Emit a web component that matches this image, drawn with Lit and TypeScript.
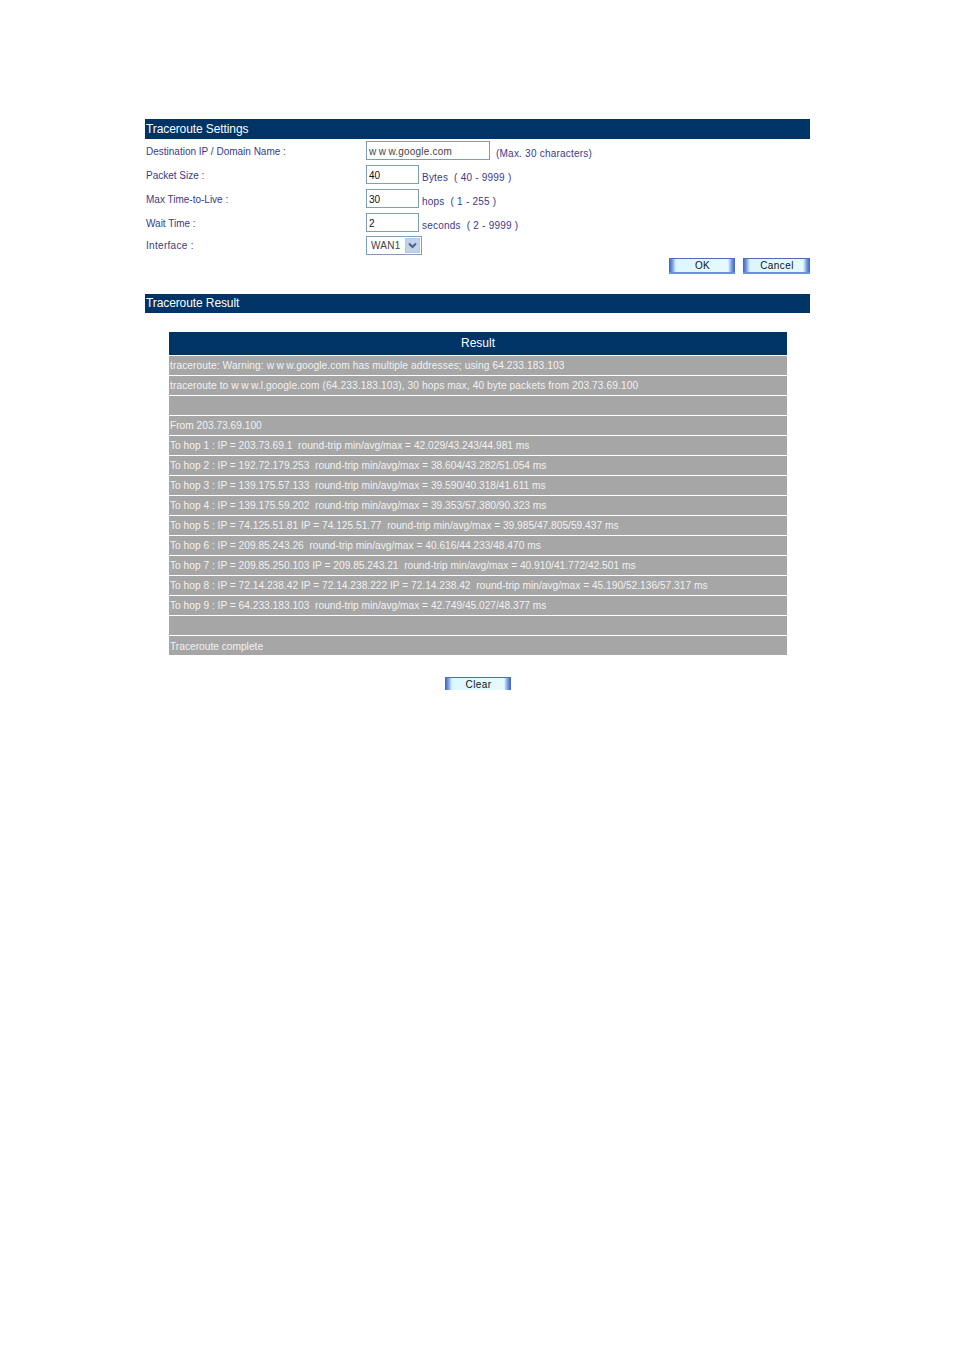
import { LitElement, html, css } from "lit";
import { customElement } from "lit/decorators.js";

const www = html`<span class="www">ww</span>w`;

const rows: unknown[] = [
  html`traceroute: Warning: ${www}.google.com has multiple addresses; using 64.233.183.103`,
  html`traceroute to ${www}.l.google.com (64.233.183.103), 30 hops max, 40 byte packets from 203.73.69.100`,
  "",
  "From 203.73.69.100",
  "To hop 1 : IP = 203.73.69.1  round-trip min/avg/max = 42.029/43.243/44.981 ms",
  "To hop 2 : IP = 192.72.179.253  round-trip min/avg/max = 38.604/43.282/51.054 ms",
  "To hop 3 : IP = 139.175.57.133  round-trip min/avg/max = 39.590/40.318/41.611 ms",
  "To hop 4 : IP = 139.175.59.202  round-trip min/avg/max = 39.353/57.380/90.323 ms",
  "To hop 5 : IP = 74.125.51.81 IP = 74.125.51.77  round-trip min/avg/max = 39.985/47.805/59.437 ms",
  "To hop 6 : IP = 209.85.243.26  round-trip min/avg/max = 40.616/44.233/48.470 ms",
  "To hop 7 : IP = 209.85.250.103 IP = 209.85.243.21  round-trip min/avg/max = 40.910/41.772/42.501 ms",
  "To hop 8 : IP = 72.14.238.42 IP = 72.14.238.222 IP = 72.14.238.42  round-trip min/avg/max = 45.190/52.136/57.317 ms",
  "To hop 9 : IP = 64.233.183.103  round-trip min/avg/max = 42.749/45.027/48.377 ms",
  "",
  "Traceroute complete",
];

const settings = [
  { label: "Packet Size :", value: "40", hint: "Bytes  ( 40 - 9999 )" },
  { label: "Max Time-to-Live :", value: "30", hint: "hops  ( 1 - 255 )" },
  { label: "Wait Time :", value: "2", hint: "seconds  ( 2 - 9999 )" },
];

@customElement("app-root")
export class AppRoot extends LitElement {
  static styles = css`
    :host {
      display: block;
      height: 1350px;
      background: #fff;
      font-family: "Liberation Sans", Arial, sans-serif;
      overflow: hidden;
    }
    .page {
      width: 665px;
      margin-left: 145px;
      padding-top: 119px;
      display: flex;
      flex-direction: column;
    }
    .bar {
      background: #003366;
      color: #fff;
      height: 20px;
      line-height: 20px;
      font-size: 12px;
      letter-spacing: -0.1px;
      padding-left: 1px;
      white-space: pre;
    }
    .bar.second {
      height: 19px;
      line-height: 19px;
      margin-top: 20px;
    }
    .form {
      display: grid;
      grid-template-columns: 221px 1fr;
      grid-template-rows: 24px 24px 24px 23px 24px;
      color: #3a3a8c;
      font-size: 10px;
      padding-top: 2px;
    }
    .label {
      padding-left: 1px;
      line-height: 22px;
      white-space: pre;
    }
    .label.iface {
      line-height: 20px;
      letter-spacing: 0.3px;
    }
    .ctl {
      display: flex;
      align-items: flex-start;
      white-space: pre;
    }
    .field {
      box-sizing: border-box;
      height: 19px;
      border: 1px solid #7f9db9;
      color: #111;
      background: #fff;
      font-size: 10px;
      line-height: 17px;
      padding: 1px 0 0 2px;
    }
    .field.long {
      width: 124px;
      letter-spacing: 0.2px;
      color: #444;
    }
    .field .www {
      letter-spacing: 2.5px;
    }
    .field.short {
      width: 53px;
    }
    .hint {
      line-height: 26px;
      margin-left: 3px;
      letter-spacing: 0.22px;
    }
    .hint.max {
      margin-left: 6px;
    }
    .select {
      box-sizing: border-box;
      width: 56px;
      height: 19px;
      border: 1px solid #7f9db9;
      display: flex;
      align-items: center;
      justify-content: space-between;
      padding: 1px 1px 1px 4px;
      color: #444;
      font-size: 10px;
      letter-spacing: 0.3px;
    }
    .arrow {
      width: 15px;
      height: 15px;
      background: #c1d2ee;
      border: 1px solid #b4c8ec;
      box-sizing: border-box;
      display: flex;
      align-items: center;
      justify-content: center;
    }
    .actions {
      display: flex;
      justify-content: flex-end;
      gap: 8px;
      height: 16px;
      margin-top: -2px;
    }
    .btn {
      box-sizing: border-box;
      width: 66px;
      height: 16px;
      background: linear-gradient(
        90deg,
        #3d62c6 0,
        #6f92dc 3px,
        #dcf6ff 7px,
        #e4fbff calc(100% - 7px),
        #6f92dc calc(100% - 3px),
        #3d62c6 100%
      );
      border-top: 1px solid #4a6fc0;
      border-bottom: 2px solid #6c8fd8;
      color: #111;
      font-size: 10px;
      line-height: 13px;
      text-align: center;
      letter-spacing: 0.4px;
      padding-left: 1px;
    }
    .btn.wide {
      width: 67px;
    }
    .btn.cut {
      height: 13px;
      border-bottom: none;
      line-height: 14px;
    }
    .wrap {
      padding: 19px 23px 0 24px;
      display: flex;
      flex-direction: column;
      gap: 1px;
    }
    .head {
      background: #003366;
      color: #fff;
      font-size: 12px;
      height: 23px;
      line-height: 23px;
      text-align: center;
    }
    .row {
      background: #a6a6a6;
      color: #f2f2f2;
      font-size: 10.2px;
      height: 19px;
      line-height: 20px;
      padding-left: 1px;
      white-space: pre;
    }
    .row.warn {
      letter-spacing: 0.09px;
    }
    .row .www {
      letter-spacing: 2.5px;
    }
    .row:last-child {
      line-height: 22px;
    }
    .clear {
      display: flex;
      justify-content: center;
      margin-top: 22px;
      padding-left: 1px;
    }
  `;

  render() {
    return html`
      <div class="page">
        <div class="bar">Traceroute Settings</div>
        <div class="form">
          <div class="label">Destination IP / Domain Name :</div>
          <div class="ctl">
            <div class="field long"><span class="www">ww</span>w.google.com</div>
            <span class="hint max">(Max. 30 characters)</span>
          </div>
          ${settings.map(
            (s) => html`
              <div class="label">${s.label}</div>
              <div class="ctl">
                <div class="field short">${s.value}</div>
                <span class="hint">${s.hint}</span>
              </div>
            `
          )}
          <div class="label iface">Interface :</div>
          <div class="ctl">
            <div class="select">
              <span>WAN1</span>
              <span class="arrow">
                <svg width="9" height="7" viewBox="0 0 9 7">
                  <path d="M1 1.5 L4.5 5 L8 1.5" fill="none" stroke="#4d6185" stroke-width="2" />
                </svg>
              </span>
            </div>
          </div>
        </div>
        <div class="actions">
          <div class="btn">OK</div>
          <div class="btn wide">Cancel</div>
        </div>
        <div class="bar second">Traceroute Result</div>
        <div class="wrap">
          <div class="head">Result</div>
          ${rows.map(
            (r, i) => html`<div class="row ${i < 2 ? "warn" : ""}">${r}</div>`
          )}
        </div>
        <div class="clear"><div class="btn cut">Clear</div></div>
      </div>
    `;
  }
}
